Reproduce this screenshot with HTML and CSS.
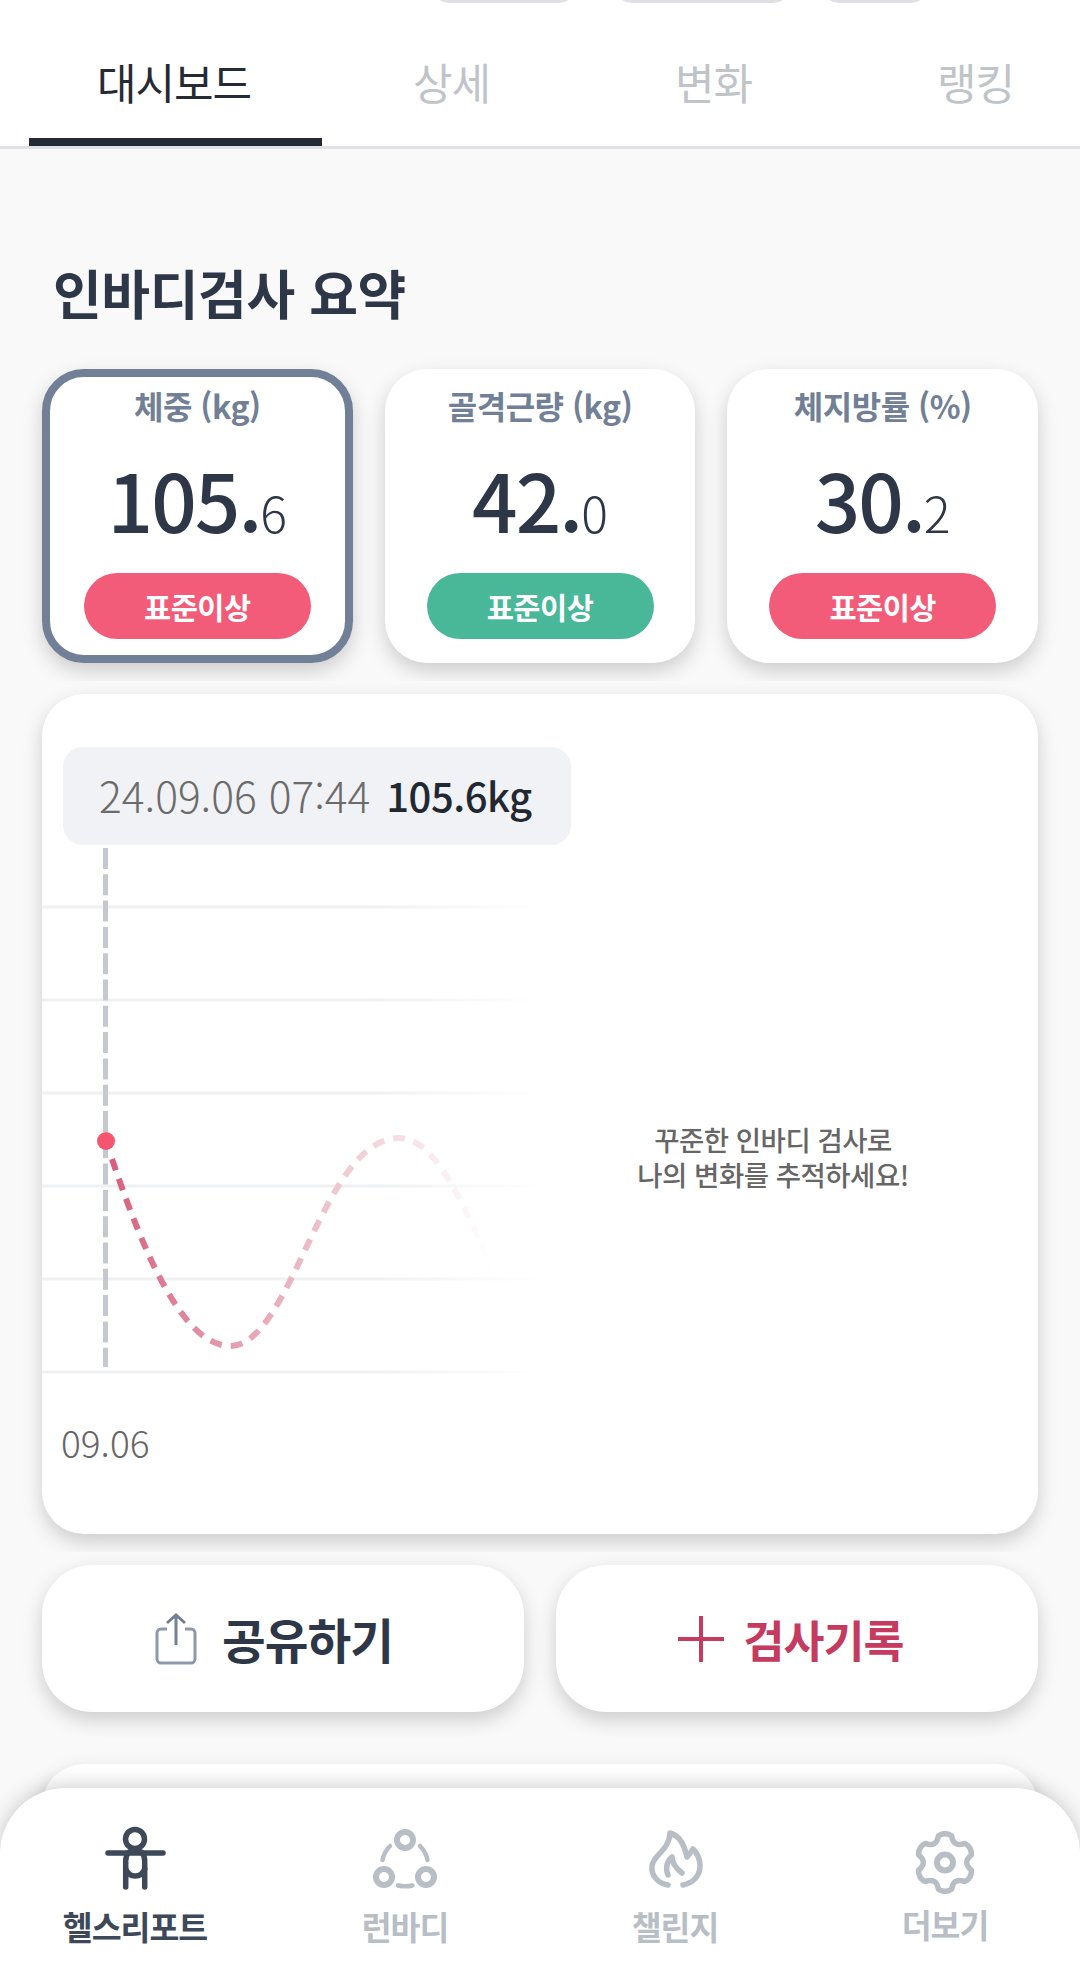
FILE: index.html
```html
<!DOCTYPE html>
<html lang="ko">
  <head>
    <meta charset="UTF-8" />
    <link rel="stylesheet" href="styles.css">
  </head>
  <body>
    <div class="page">
      <header class="top">
        <div class="chips">
          <span class="chip chip-a"></span>
          <span class="chip chip-b"></span>
          <span class="chip chip-c"></span>
        </div>
        <nav class="tabs">
          <a class="tab tab-active">대시보드</a>
          <a class="tab">상세</a>
          <a class="tab">변화</a>
          <a class="tab">랭킹</a>
        </nav>
      </header>

      <h1 class="title">인바디검사 요약</h1>

      <section class="clip clip-cards">
        <div class="card stat-card stat-selected">
          <div class="stat-label">체중 (kg)</div>
          <div class="stat-value">105.<small>6</small></div>
          <div class="pill pill-red">표준이상</div>
        </div>
        <div class="card stat-card">
          <div class="stat-label">골격근량 (kg)</div>
          <div class="stat-value">42.<small>0</small></div>
          <div class="pill pill-green">표준이상</div>
        </div>
        <div class="card stat-card">
          <div class="stat-label">체지방률 (%)</div>
          <div class="stat-value">30.<small>2</small></div>
          <div class="pill pill-red">표준이상</div>
        </div>
      </section>

      <section class="clip clip-chart">
        <div class="card chart-card">
          <div class="tooltip">
            <span class="tooltip-date">24.09.06 07:44</span>
            <span class="tooltip-value">105.6kg</span>
          </div>
          <div class="chart-row">
            <svg class="plot" width="500" height="526" viewBox="0 0 500 526">
              <defs>
                <linearGradient id="gridFade" gradientUnits="userSpaceOnUse" x1="0" y1="0" x2="500" y2="0">
                  <stop offset="0.65" stop-color="#eef0f2" />
                  <stop offset="1" stop-color="#ffffff" />
                </linearGradient>
                <linearGradient id="curveFade" gradientUnits="userSpaceOnUse" x1="70" y1="0" x2="450" y2="0">
                  <stop offset="0" stop-color="#d8607c" />
                  <stop offset="0.3" stop-color="#e59bad" />
                  <stop offset="0.7" stop-color="#f3d7de" />
                  <stop offset="1" stop-color="#ffffff" />
                </linearGradient>
              </defs>
              <g stroke="url(#gridFade)" stroke-width="3">
                <path d="M0 59H500" />
                <path d="M0 152H500" />
                <path d="M0 245H500" />
                <path d="M0 338H500" />
                <path d="M0 431H500" />
                <path d="M0 524H500" />
              </g>
              <path d="M63.5 0V519" stroke="#c5c8ce" stroke-width="5" stroke-dasharray="21 5.3" fill="none" />
              <path d="M70 311C100 400 140 498 188 498C250 498 280 290 357 290C400 290 430 380 463 449" stroke="url(#curveFade)" stroke-width="6" stroke-dasharray="12 9" fill="none" />
              <circle cx="64" cy="293" r="9" fill="#f4566f" />
            </svg>
            <p class="chart-note">꾸준한 인바디 검사로<br />나의 변화를 추적하세요!</p>
          </div>
          <div class="chart-date">09.06</div>
        </div>
      </section>

      <section class="clip clip-actions">
        <div class="card action action-share">
          <svg class="share-icon" width="42" height="52" viewBox="0 0 42 52" fill="none">
            <path d="M12 16H6a4 4 0 0 0-4 4v26a4 4 0 0 0 4 4h30a4 4 0 0 0 4-4V20a4 4 0 0 0-4-4h-6" stroke="#8d99a8" stroke-width="3" />
            <path d="M21 32V2M12 10l9-8 9 8" stroke="#718096" stroke-width="3" />
          </svg>
          <span>공유하기</span>
        </div>
        <div class="card action action-red">
          <svg width="46" height="46" viewBox="0 0 46 46" fill="none">
            <path d="M0 23H46M23 0V46" stroke="#c53a5f" stroke-width="4" />
          </svg>
          <span>검사기록</span>
        </div>
      </section>

      <div class="card peek"></div>

      <nav class="bottom-nav">
        <a class="nav-item nav-active">
          <svg width="70" height="70" viewBox="0 0 70 70" fill="none" stroke="#3d4858" stroke-width="5.5" stroke-linecap="round">
            <circle cx="35" cy="14" r="9.5" />
            <path d="M8 28H63" />
            <path d="M25.7 62V36c0-7 4-11 9.5-11s9.5 4 9.5 11v26" />
            <path d="M25.7 44c2 5 5 7 9.5 7s7.5-2 9.5-7" />
          </svg>
          <span>헬스리포트</span>
        </a>
        <a class="nav-item">
          <svg width="70" height="70" viewBox="0 0 70 70" fill="none" stroke="#b8bec5" stroke-width="6" stroke-linecap="round">
            <circle cx="35" cy="15" r="8" />
            <circle cx="14" cy="52" r="8" />
            <circle cx="56" cy="52" r="8" />
            <path d="M20 21C16 25 13.500 30 12.500 35" stroke-width="4.500" />
            <path d="M50 21C54 25 56.500 30 57.500 35" stroke-width="4.500" />
            <path d="M28 60.500C32 61.500 38 61.500 42.500 60.500" stroke-width="4.500" />
          </svg>
          <span>런바디</span>
        </a>
        <a class="nav-item">
          <svg width="70" height="70" viewBox="0 0 70 70" fill="none" stroke="#b8bec5" stroke-width="5.5" stroke-linecap="round" stroke-linejoin="round">
            <path d="M28 60C17 58 11 50 12 41C13 30 29 26 30 8C38 10 44 18 47 32C49 30 51 27 53 24C57 28 60 34 60 41C60 51 53 58 43 60" />
            <path d="M28 50C25 43 27 36 32 32C32 38 37 44 42 48" />
          </svg>
          <span>챌린지</span>
        </a>
        <a class="nav-item nav-more">
          <svg width="70" height="70" viewBox="0 0 70 70" fill="none" stroke="#b8bec5" stroke-width="5.500" stroke-linejoin="round">
            <path d="M28.350 10.800Q35 6.500 41.650 10.800Q43.500 22.800 54.800 18.400Q61.800 22 61.400 29.900Q52 37.500 61.400 45.100Q61.800 53 54.800 56.600Q43.500 52.200 41.650 64.200Q35 68.500 28.350 64.200Q26.500 52.200 15.200 56.600Q8.200 53 8.600 45.100Q18 37.500 8.600 29.900Q8.200 22 15.200 18.400Q26.500 22.800 28.350 10.800Z" />
            <circle cx="35" cy="37.500" r="8" stroke-width="6" />
          </svg>
          <span>더보기</span>
        </a>
      </nav>
    </div>
  </body>
</html>
```

FILE: styles.css
```css
* {
  box-sizing: border-box;
}

html,
body {
  margin: 0;
  padding: 0;
}

body {
  font-family: "Noto Sans CJK KR", "Noto Sans", sans-serif;
}

.page {
  position: relative;
  width: 1080px;
  height: 1987px;
  overflow: hidden;
  background-color: #f9f9fa;
}

/* top tabs */
.top {
  height: 149px;
  background-color: #fff;
  border-bottom: 3px solid #dfe1e5;
  overflow: hidden;
}

.chips {
  display: flex;
  height: 3px;
  padding-left: 431px;
  overflow: hidden;
}

.chip {
  flex: none;
  height: 40px;
  margin-top: -37px;
  border: 3px solid #dfe1e5;
  border-radius: 18px;
}

.chip-a {
  width: 146px;
  margin-right: 37px;
}

.chip-b {
  width: 177px;
  margin-right: 30px;
}

.chip-c {
  width: 108px;
}

.tabs {
  display: flex;
  height: 143px;
  padding-left: 29px;
}

.tab {
  flex: none;
  width: 262px;
  padding: 49px 3px 0 0;
  font-size: 43px;
  line-height: 58px;
  text-align: center;
  letter-spacing: -1px;
  font-weight: 400;
  color: #bfc4c9;
}

.tab-active {
  width: 293px;
  color: #252a35;
  border-bottom: 8px solid #252a35;
}

.title {
  margin: 0;
  padding: 103px 0 0 53px;
  height: 187px;
  font-size: 53px;
  line-height: 80px;
  font-weight: 700;
  letter-spacing: -0.4px;
  color: #2d3748;
}

/* shadows get cut off at the end of each block */
.clip {
  display: flex;
  overflow: hidden;
  padding: 33px 42px 18px;
  gap: 32px;
}

.clip-chart {
  padding-top: 13px;
}

.clip-actions {
  padding-top: 13px;
  padding-bottom: 25px;
}

.card {
  background-color: #fff;
  border-radius: 42px;
  box-shadow: 0 8px 20px rgba(0, 0, 0, 0.18);
}

/* stat cards */
.stat-card {
  flex: 1;
  height: 294px;
  padding-top: 8px;
  display: flex;
  flex-direction: column;
  align-items: center;
  border: 8px solid transparent;
  background-clip: border-box;
}

.stat-selected {
  border-color: #718096;
}

.stat-label {
  height: 40px;
  font-size: 32px;
  line-height: 40px;
  font-weight: 700;
  letter-spacing: -0.5px;
  color: #718096;
}

.stat-value {
  margin-top: 20px;
  height: 106px;
  font-size: 80px;
  line-height: 106px;
  font-weight: 500;
  letter-spacing: -2px;
  color: #2d3748;
}

.stat-value small {
  font-size: 50px;
  font-weight: 300;
  letter-spacing: 0;
}

.pill {
  margin-top: 22px;
  width: 227px;
  height: 66px;
  border-radius: 33px;
  font-size: 29.5px;
  line-height: 66px;
  font-weight: 700;
  text-align: center;
  letter-spacing: -0.5px;
  color: #fff;
}

.pill-red {
  background-color: #f25c78;
}

.pill-green {
  background-color: #48b899;
}

/* chart */
.chart-card {
  width: 996px;
  height: 840px;
  padding-top: 53px;
}

.tooltip {
  display: flex;
  align-items: center;
  gap: 16px;
  width: 508px;
  height: 98px;
  margin-left: 21px;
  padding: 0 0 3px 36px;
  border-radius: 20px;
  background-color: #f0f2f5;
}

.tooltip-date {
  font-size: 42.5px;
  font-weight: 300;
  color: #6b6b6b;
}

.tooltip-value {
  font-size: 40px;
  font-weight: 500;
  letter-spacing: -0.5px;
  color: #222831;
}

.chart-row {
  display: flex;
  margin-top: 3px;
}

.plot {
  flex: none;
  display: block;
}

.chart-note {
  flex: 1;
  margin: 0;
  padding: 274px 34px 0 0;
  font-size: 27.5px;
  line-height: 35px;
  font-weight: 500;
  text-align: center;
  letter-spacing: -0.5px;
  color: #666;
}

.chart-date {
  margin: 43px 0 0 19px;
  font-size: 37px;
  line-height: 50px;
  font-weight: 300;
  color: #666;
}

/* buttons */
.action {
  flex: none;
  width: 482px;
  height: 147px;
  display: flex;
  align-items: center;
  justify-content: center;
  gap: 25px;
  padding-right: 18px;
  border-radius: 50px;
  font-size: 47.5px;
  font-weight: 700;
  letter-spacing: -1px;
  color: #2d3748;
}

.action-red {
  gap: 20px;
  padding-right: 13px;
  font-size: 44.5px;
  color: #c53a5f;
}

.peek {
  height: 120px;
  margin: 27px 42px 0;
}

/* bottom nav */
.bottom-nav {
  position: absolute;
  left: 0;
  right: 0;
  bottom: 0;
  height: 199px;
  display: flex;
  padding-top: 37px;
  background-color: #fff;
  border-radius: 66px 66px 0 0;
  box-shadow: 0 -3px 20px rgba(0, 0, 0, 0.18);
}

.nav-item {
  flex: 1;
  display: flex;
  flex-direction: column;
  align-items: center;
  font-size: 32.5px;
  line-height: 36px;
  font-weight: 700;
  letter-spacing: -1px;
  color: #b8bec5;
}

.nav-item span {
  margin-top: 13px;
}

.nav-active {
  color: #3d4858;
}

.nav-more span {
  margin-top: 11px;
}
```
